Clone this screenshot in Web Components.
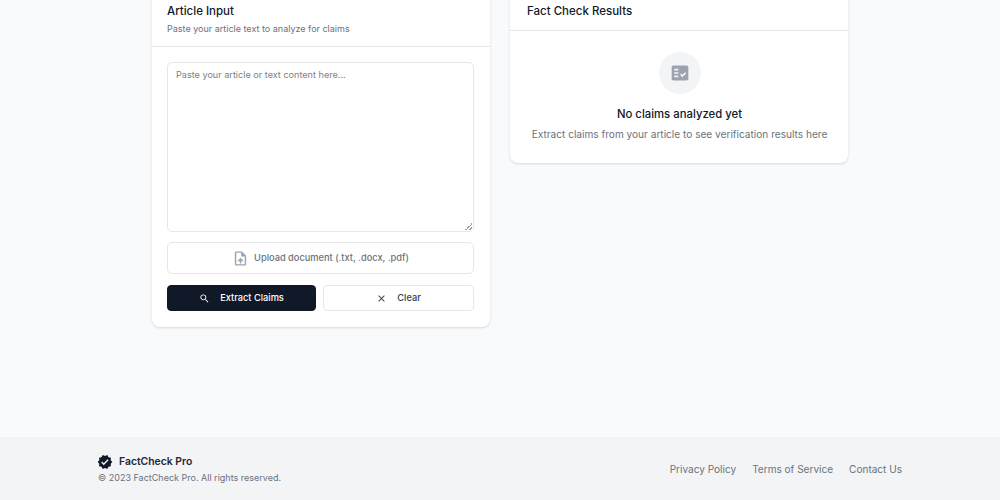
<!DOCTYPE html>
<html lang="en">
<head>
<meta charset="utf-8">
<title>FactCheck Pro</title>
<style>
  html, body { margin: 0; height: 100%; overflow: hidden; }
  body {
    display: flex;
    flex-direction: column;
    background: #f9fafb;
    font-family: Inter, "Noto Sans", sans-serif;
  }
  fc-main { flex: 1; }
</style>
</head>
<body>
<fc-main>
  <fc-card style="--card-pad: 15px" title="Article Input" subtitle="Paste your article text to analyze for claims">
    <fc-article-form></fc-article-form>
  </fc-card>
  <fc-card style="--card-pad: 17px" title="Fact Check Results">
    <fc-empty heading="No claims analyzed yet" text="Extract claims from your article to see verification results here"></fc-empty>
  </fc-card>
</fc-main>
<fc-footer></fc-footer>

<script>
const ICONS = {
  search: 'M15.5 14h-.79l-.28-.27C15.41 12.59 16 11.11 16 9.5 16 5.91 13.09 3 9.5 3S3 5.91 3 9.5 5.91 16 9.5 16c1.61 0 3.09-.59 4.23-1.57l.27.28v.79l5 4.99L20.49 19l-4.99-5zm-6 0C7.01 14 5 11.99 5 9.5S7.01 5 9.5 5 14 7.01 14 9.5 11.99 14 9.5 14z',
  close: 'M19 6.41L17.59 5 12 10.59 6.41 5 5 6.41 10.59 12 5 17.59 6.41 19 12 13.41 17.59 19 19 17.59 13.41 12z',
  upload: 'M14 2H6c-1.1 0-1.99.9-1.99 2L4 20c0 1.1.89 2 1.99 2H18c1.1 0 2-.9 2-2V8l-6-6zm4 18H6V4h7v5h5v11zM8 15.01l1.41 1.41L11 14.84V19h2v-4.16l1.59 1.59L16 15.01 12.01 11 8 15.01z',
  factCheck: 'M20 3H4c-1.1 0-2 .9-2 2v14c0 1.1.9 2 2 2h16c1.1 0 2-.9 2-2V5c0-1.1-.9-2-2-2zM10 17H5v-2h5v2zm0-4H5v-2h5v2zm0-4H5V7h5v2zm4.82 8L12 14.16l1.41-1.41 1.41 1.42L18.17 11l1.42 1.42L14.82 17z',
  verified: 'M23 12l-2.44-2.79.34-3.69-3.61-.82-1.89-3.2L12 2.96 8.6 1.5 6.71 4.69 3.1 5.5l.34 3.7L1 12l2.44 2.79-.34 3.7 3.61.82L8.6 22.5l3.4-1.47 3.4 1.46 1.89-3.19 3.61-.82-.34-3.69L23 12zm-12.91 4.72l-3.8-3.81 1.48-1.48 2.32 2.33 5.85-5.87 1.48 1.48-7.33 7.35z'
}
const icon = (name, size) => `<svg width="${size}" height="${size}" viewBox="0 0 24 24" fill="currentColor" aria-hidden="true"><path d="${ICONS[name]}"/></svg>`

class FcMain extends HTMLElement {
  constructor() {
    super()
    this.attachShadow({ mode: 'open' }).innerHTML = `
    <style>
      :host { display: block; min-height: 0; }
      .grid {
        display: grid;
        grid-template-columns: 338px 338px;
        gap: 20px;
        align-items: start;
        justify-content: center;
        margin-top: -16px;
      }
    </style>
    <div class="grid"><slot></slot></div>`
  }
}

class FcCard extends HTMLElement {
  constructor() {
    super()
    const sub = this.getAttribute('subtitle')
    this.attachShadow({ mode: 'open' }).innerHTML = `
    <style>
      :host {
        display: block;
        background: #fff;
        border-radius: 8px;
        box-shadow: 0 1px 3px rgba(0,0,0,.1), 0 1px 2px rgba(0,0,0,.04);
      }
      header {
        padding: 17px 16px 9px var(--card-pad, 16px);
        border-bottom: 1px solid #e5e7eb;
      }
      h2 {
        margin: 0;
        font: 500 11.5px/20px Inter, sans-serif;
        color: #111827;
      }
      p {
        margin: 0;
        font: 400 9px/16px Inter, sans-serif;
        color: #6b7280;
      }
    </style>
    <header>
      <h2>${this.getAttribute('title')}</h2>
      ${sub ? `<p>${sub}</p>` : ''}
    </header>
    <slot></slot>`
  }
}

class FcButton extends HTMLElement {
  constructor() {
    super()
    const dark = this.hasAttribute('primary')
    this.attachShadow({ mode: 'open' }).innerHTML = `
    <style>
      :host { display: block; }
      button {
        display: flex;
        align-items: center;
        justify-content: center;
        gap: 10px;
        width: 100%;
        height: 26px;
        padding: 0;
        border-radius: 4px;
        font: 500 9.25px/1 Inter, sans-serif;
        border: 1px solid ${dark ? '#111827' : '#e5e7eb'};
        background: ${dark ? '#111827' : '#fff'};
        color: ${dark ? '#fff' : '#374151'};
      }
      svg { display: block; }
    </style>
    <button type="button">${icon(this.getAttribute('icon'), 11)}<slot></slot></button>`
  }
}

class FcUpload extends HTMLElement {
  constructor() {
    super()
    this.attachShadow({ mode: 'open' }).innerHTML = `
    <style>
      :host { display: block; }
      label {
        display: flex;
        align-items: center;
        justify-content: center;
        gap: 5px;
        height: 32px;
        box-sizing: border-box;
        border: 1.5px solid #e5e7eb;
        border-radius: 5px;
        background: #fff;
        color: #6b7280;
        font: 500 9.25px/1 Inter, sans-serif;
      }
      svg { display: block; color: #9ca3af; }
    </style>
    <label>${icon('upload', 17)}<slot></slot></label>`
  }
}

class FcArticleForm extends HTMLElement {
  constructor() {
    super()
    this.attachShadow({ mode: 'open' }).innerHTML = `
    <style>
      :host { display: block; padding: 15px 16px 16px 15px; }
      .form { display: flex; flex-direction: column; }
      textarea {
        display: block;
        box-sizing: border-box;
        width: 100%;
        height: 170px;
        margin: 0 0 10px;
        padding: 6px 8px;
        border: 1px solid #e5e7eb;
        border-radius: 5px;
        outline: none;
        font: 400 9.1px/1.4 Inter, sans-serif;
        color: #111827;
        background: #fff;
      }
      textarea::placeholder { color: #7d7f85; opacity: 1; }
      textarea::-webkit-resizer {
        background: linear-gradient(135deg, transparent 50%, #9ca3af 50%, #9ca3af 62%, transparent 62%, transparent 75%, #9ca3af 75%, #9ca3af 87%, transparent 87%) no-repeat right 1px bottom 1px / 7px 7px;
      }
      .actions {
        display: grid;
        grid-template-columns: 149px 1fr;
        gap: 7px;
        margin-top: 11px;
      }
    </style>
    <div class="form">
      <textarea placeholder="Paste your article or text content here..."></textarea>
      <fc-upload>Upload document (.txt, .docx, .pdf)</fc-upload>
      <div class="actions">
        <fc-button primary icon="search">Extract Claims</fc-button>
        <fc-button icon="close">Clear</fc-button>
      </div>
    </div>`
  }
}

class FcEmpty extends HTMLElement {
  constructor() {
    super()
    this.attachShadow({ mode: 'open' }).innerHTML = `
    <style>
      :host {
        display: flex;
        flex-direction: column;
        align-items: center;
        padding: 21px 15px 20px 16px;
        text-align: center;
      }
      .badge {
        display: flex;
        align-items: center;
        justify-content: center;
        width: 42px;
        height: 42px;
        border-radius: 50%;
        background: #f3f4f6;
        color: #9ca3af;
        margin-bottom: 10px;
      }
      h3 {
        margin: 0 0 1px;
        font: 500 11.35px/20px Inter, sans-serif;
        color: #111827;
      }
      p {
        margin: 0;
        font: 400 10.1px/18px Inter, sans-serif;
        color: #6b7280;
      }
    </style>
    <div class="badge">${icon('factCheck', 20)}</div>
    <h3>${this.getAttribute('heading')}</h3>
    <p>${this.getAttribute('text')}</p>`
  }
}

class FcFooter extends HTMLElement {
  constructor() {
    super()
    this.attachShadow({ mode: 'open' }).innerHTML = `
    <style>
      :host { display: block; background: #f3f4f6; height: 63px; flex: none; }
      .row {
        display: flex;
        align-items: center;
        justify-content: space-between;
        height: 100%;
        padding: 0 98px;
        box-sizing: border-box;
      }
      .info { margin-top: 3px; }
      .brand {
        display: flex;
        align-items: center;
        gap: 6px;
        font: 600 10.4px/16px Inter, sans-serif;
        color: #1f2937;
      }
      .brand svg { display: block; color: #111827; margin-left: -1px; }
      small {
        display: block;
        font: 400 9px/16px Inter, sans-serif;
        color: #6b7280;
      }
      nav { display: flex; gap: 16px; }
      a {
        font: 400 10.05px/16px Inter, sans-serif;
        color: #6b7280;
        text-decoration: none;
      }
    </style>
    <div class="row">
      <div class="info">
        <div class="brand">${icon('verified', 16)}<span>FactCheck Pro</span></div>
        <small>© 2023 FactCheck Pro. All rights reserved.</small>
      </div>
      <nav>
        <a href="#">Privacy Policy</a>
        <a href="#">Terms of Service</a>
        <a href="#">Contact Us</a>
      </nav>
    </div>`
  }
}

customElements.define('fc-main', FcMain)
customElements.define('fc-card', FcCard)
customElements.define('fc-button', FcButton)
customElements.define('fc-upload', FcUpload)
customElements.define('fc-article-form', FcArticleForm)
customElements.define('fc-empty', FcEmpty)
customElements.define('fc-footer', FcFooter)
</script>
</body>
</html>
